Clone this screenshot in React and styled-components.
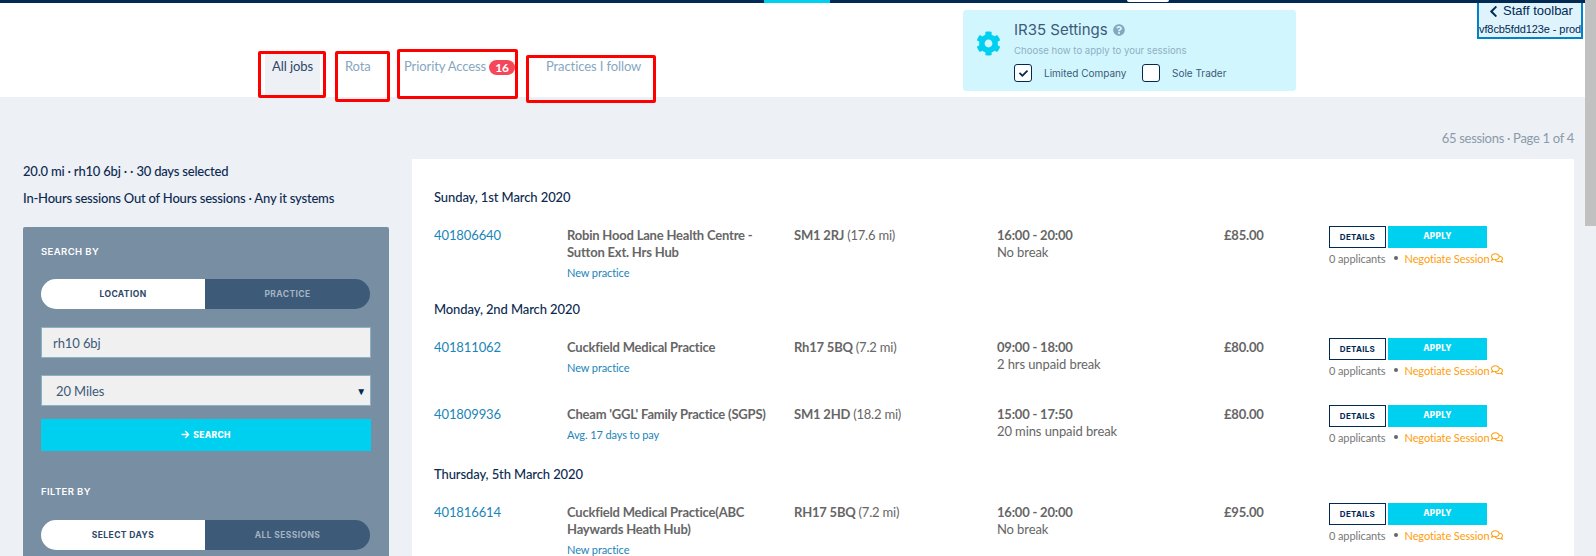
import React from "react";
import styled, { createGlobalStyle } from "styled-components";
import {
  FaChevronLeft,
  FaCog,
  FaQuestionCircle,
  FaCheck,
  FaArrowRight,
  FaRegComments,
} from "react-icons/fa";

const GlobalStyle = createGlobalStyle`
  html, body {
    margin: 0;
    height: 556px;
    overflow: hidden;
    background: #edf0f5;
  }
  * {
    box-sizing: border-box;
  }
`;

const HEADING_FONT = `"Inter", "Open Sans", sans-serif`;
const BODY_FONT = `"Lato", "Liberation Sans", sans-serif`;

const Page = styled.div`
  display: flex;
  height: 556px;
  overflow: hidden;
  font-family: ${BODY_FONT};
`;

const Main = styled.div`
  flex: 1;
  min-width: 0;
`;

// Browser scrollbar on the right edge
const ScrollTrack = styled.div`
  width: 11px;
  background: #edf0f5;
`;

const ScrollThumb = styled.div`
  height: 226px;
  background: #c1c1c1;
`;

const TopBar = styled.div`
  height: 3px;
  background: #002a54;
  display: flex;
`;

const ActiveNavMark = styled.div`
  width: 66px;
  margin-left: 764px;
  background: #00d0f0;
`;

const UserMark = styled.div`
  width: 42px;
  height: 2px;
  margin-left: 297px;
  background: #fff;
  border-radius: 0 0 3px 3px;
`;

const Header = styled.header`
  position: relative;
  display: flex;
  height: 94px;
  padding-left: 258px;
  background: #fff;
`;

const TabRow = styled.nav`
  display: flex;
  align-items: flex-start;
  width: 398px;
  padding-top: 46px;
`;

// Red annotation box around each tab, it hangs over the grey page below
const Tab = styled.a`
  flex: none;
  position: relative;
  z-index: 2;
  display: flex;
  align-items: flex-start;
  width: ${(p) => p.$width}px;
  height: ${(p) => p.$height}px;
  margin-top: ${(p) => p.$top}px;
  margin-left: ${(p) => p.$left}px;
  padding-top: ${(p) => p.$textTop}px;
  padding-left: ${(p) => p.$textLeft}px;
  border: 3px solid #ff0000;
  border-radius: 2px;
  font-size: 13px;
  line-height: 16px;
  letter-spacing: -0.1px;
  white-space: nowrap;
  color: #86a8bf;
`;

const ActiveTabFill = styled.span`
  flex: none;
  width: 55px;
  height: calc(100% + 4px);
  margin-top: -4px;
  padding-top: 4px;
  text-align: center;
  background: #edf0f5;
  color: #2d4767;
`;

const Badge = styled.span`
  height: 15px;
  margin-left: 3px;
  margin-top: 2px;
  padding: 0 6px;
  border-radius: 8px;
  background: #f6475a;
  color: #fff;
  font-size: 12px;
  font-weight: 700;
  line-height: 16px;
`;

const SettingsCard = styled.section`
  display: flex;
  align-items: flex-start;
  width: 333px;
  height: 81px;
  margin-top: 7px;
  margin-left: 307px;
  padding: 0 0 0 13px;
  border-radius: 3px;
  background: #d2f6fe;
`;

const GearIcon = styled(FaCog)`
  flex: none;
  width: 25px;
  height: 25px;
  margin-top: 21px;
  color: #00d0f0;
`;

const SettingsBody = styled.div`
  margin-left: 13px;
  padding-top: 11px;
`;

const SettingsTitle = styled.h3`
  display: flex;
  align-items: center;
  gap: 5px;
  margin: 0;
  font-family: ${HEADING_FONT};
  font-size: 15px;
  font-weight: 400;
  line-height: 18px;
  color: #3d5a78;
`;

const HelpIcon = styled(FaQuestionCircle)`
  width: 12px;
  height: 12px;
  color: #86a8bf;
`;

const SettingsHint = styled.p`
  margin: 5px 0 0;
  font-family: ${HEADING_FONT};
  font-size: 9.6px;
  line-height: 14px;
  color: #8fb0c2;
`;

const CheckRow = styled.div`
  display: flex;
  align-items: center;
  margin-top: 6px;
`;

const CheckBox = styled.span`
  flex: none;
  display: flex;
  align-items: center;
  justify-content: center;
  width: 18px;
  height: 18px;
  border: 1.5px solid #002a54;
  border-radius: 3px;
  background: #fff;
  color: #002a54;
  font-size: 9px;
`;

const CheckLabel = styled.span`
  width: ${(p) => p.$width}px;
  margin-left: 12px;
  font-family: ${HEADING_FONT};
  font-size: 10px;
  color: #3d5a78;
`;

const StaffToolbar = styled.aside`
  position: absolute;
  top: 0;
  right: 2px;
  z-index: 3;
  width: 106px;
  height: 36px;
  border: 2px solid #0082ca;
  border-top: 0;
  background: #dff3fd;
  color: #002a54;
  font-family: "Liberation Sans", sans-serif;
  text-align: center;
  white-space: nowrap;
`;

const ToolbarTitle = styled.div`
  display: flex;
  align-items: center;
  justify-content: center;
  gap: 3px;
  font-size: 13px;
  line-height: 16px;
`;

const ToolbarVersion = styled.div`
  margin-top: 2px;
  font-size: 11px;
  line-height: 16px;
  letter-spacing: -0.1px;
`;

const Content = styled.div`
  display: grid;
  grid-template-columns: 366px 1fr;
  column-gap: 23px;
  padding: 0 11px 0 23px;
`;

const LeftColumn = styled.div`
  padding-top: 61px;
`;

const Summary = styled.p`
  margin: 0;
  font-size: 13px;
  font-weight: 500;
  line-height: 27px;
  letter-spacing: -0.2px;
  white-space: nowrap;
  color: #0c2a50;
`;

const SearchPanel = styled.div`
  height: 400px;
  margin-top: 15px;
  padding: 0 18px;
  border-radius: 2px;
  background: #778ea3;
`;

const PanelLabel = styled.h4`
  margin: 0;
  padding-top: ${(p) => p.$top}px;
  font-family: ${HEADING_FONT};
  font-size: 9.5px;
  font-weight: 600;
  line-height: 14px;
  letter-spacing: 0.4px;
  color: #fff;
`;

const Toggle = styled.div`
  display: grid;
  grid-template-columns: 164px 165px;
  height: 30px;
  margin-top: ${(p) => p.$top}px;
`;

const ToggleOption = styled.button`
  border: 0;
  padding: 0 0 1px;
  border-radius: ${(p) => (p.$active ? "15px 0 0 15px" : "0 15px 15px 0")};
  background: ${(p) => (p.$active ? "#fff" : "#3d5a78")};
  color: ${(p) => (p.$active ? "#2d4767" : "#a3b3c3")};
  font-family: ${HEADING_FONT};
  font-size: 8.5px;
  font-weight: 700;
  letter-spacing: 0.4px;
`;

const Field = styled.div`
  display: flex;
  align-items: center;
  justify-content: space-between;
  height: 31px;
  margin-top: ${(p) => p.$top}px;
  padding: 0 4px 0 ${(p) => p.$indent}px;
  border: 1px solid #8ab3c6;
  background: #f0f0f0;
  font-size: 13px;
  letter-spacing: -0.1px;
  color: #3d5a78;
`;

const SelectArrow = styled.span`
  font-size: 10px;
  color: #002a54;
`;

const SearchButton = styled.button`
  display: flex;
  align-items: center;
  justify-content: center;
  gap: 3px;
  width: 100%;
  height: 32px;
  margin-top: 13px;
  padding-bottom: 2px;
  border: 0;
  background: #00d0f0;
  color: #fff;
  font-family: ${HEADING_FONT};
  font-size: 8.5px;
  font-weight: 800;
  letter-spacing: 0.3px;
`;

const RightColumn = styled.div`
  min-width: 0;
`;

const SessionCount = styled.div`
  height: 62px;
  padding-top: 32px;
  text-align: right;
  font-size: 13px;
  line-height: 18px;
  letter-spacing: -0.3px;
  color: #8b9aaa;
`;

const SessionList = styled.div`
  height: 400px;
  padding: 29px 0 0 22px;
  background: #fff;
`;

const DateHeading = styled.h3`
  margin: 0 0 21px;
  font-size: 13px;
  font-weight: 500;
  line-height: 18px;
  letter-spacing: -0.1px;
  color: #0c2a50;
`;

const SessionRow = styled.div`
  display: grid;
  grid-template-columns: 133px 227px 203px 227px 105px 1fr;
  min-height: 59px;
  padding-bottom: 19px;
  font-size: 13px;
  line-height: 17px;
  letter-spacing: -0.1px;
  color: #666;

  & + & {
    margin-top: 8px;
  }
`;

const SessionId = styled.a`
  color: #1a85b8;
`;

const StrongText = styled.div`
  font-weight: 700;
  letter-spacing: -0.2px;
  color: #666;
`;

const PracticeName = styled(StrongText)`
  width: 210px;
`;

const PracticeNote = styled.a`
  display: block;
  margin-top: 3px;
  font-size: 11px;
  color: #1a85b8;
`;

const Distance = styled.span`
  font-weight: 400;
`;

const ActionColumn = styled.div`
  margin-top: -1px;
`;

const ButtonRow = styled.div`
  display: flex;
  gap: 2px;
`;

const DetailsButton = styled.button`
  width: 57px;
  height: 22px;
  padding: 0;
  border: 1px solid #002a54;
  background: #fff;
  color: #002a54;
  font-family: ${HEADING_FONT};
  font-size: 8px;
  font-weight: 700;
  letter-spacing: 0.3px;
`;

const ApplyButton = styled.button`
  width: 99px;
  height: 22px;
  padding: 0 0 2px;
  border: 0;
  background: #00d0f0;
  color: #fff;
  font-family: ${HEADING_FONT};
  font-size: 8.3px;
  font-weight: 800;
  letter-spacing: 0.3px;
`;

const ActionMeta = styled.div`
  display: flex;
  align-items: center;
  height: 18px;
  margin-top: 1px;
  font-size: 11px;
  white-space: nowrap;
  color: #777;
`;

const MetaDot = styled.span`
  width: 4px;
  height: 4px;
  margin: 0 7px 0 8px;
  border-radius: 50%;
  background: #666;
`;

const NegotiateLink = styled.a`
  display: flex;
  align-items: center;
  gap: 2px;
  color: #ff9d0a;
`;

const groups = [
  {
    date: "Sunday, 1st March 2020",
    sessions: [
      {
        id: "401806640",
        name: "Robin Hood Lane Health Centre - Sutton Ext. Hrs Hub",
        note: "New practice",
        postcode: "SM1 2RJ",
        distance: "(17.6 mi)",
        time: "16:00 - 20:00",
        breakText: "No break",
        price: "£85.00",
      },
    ],
  },
  {
    date: "Monday, 2nd March 2020",
    sessions: [
      {
        id: "401811062",
        name: "Cuckfield Medical Practice",
        note: "New practice",
        postcode: "Rh17 5BQ",
        distance: "(7.2 mi)",
        time: "09:00 - 18:00",
        breakText: "2 hrs unpaid break",
        price: "£80.00",
      },
      {
        id: "401809936",
        name: "Cheam 'GGL' Family Practice (SGPS)",
        note: "Avg. 17 days to pay",
        postcode: "SM1 2HD",
        distance: "(18.2 mi)",
        time: "15:00 - 17:50",
        breakText: "20 mins unpaid break",
        price: "£80.00",
      },
    ],
  },
  {
    date: "Thursday, 5th March 2020",
    sessions: [
      {
        id: "401816614",
        name: "Cuckfield Medical Practice(ABC Haywards Heath Hub)",
        note: "New practice",
        postcode: "RH17 5BQ",
        distance: "(7.2 mi)",
        time: "16:00 - 20:00",
        breakText: "No break",
        price: "£95.00",
      },
    ],
  },
];

function Session({ session }) {
  return (
    <SessionRow>
      <SessionId>{session.id}</SessionId>
      <div>
        <PracticeName>{session.name}</PracticeName>
        <PracticeNote>{session.note}</PracticeNote>
      </div>
      <div>
        <StrongText>
          {session.postcode} <Distance>{session.distance}</Distance>
        </StrongText>
      </div>
      <div>
        <StrongText>{session.time}</StrongText>
        <div>{session.breakText}</div>
      </div>
      <StrongText>{session.price}</StrongText>
      <ActionColumn>
        <ButtonRow>
          <DetailsButton>DETAILS</DetailsButton>
          <ApplyButton>APPLY</ApplyButton>
        </ButtonRow>
        <ActionMeta>
          0 applicants
          <MetaDot />
          <NegotiateLink>
            Negotiate Session <FaRegComments size={12} />
          </NegotiateLink>
        </ActionMeta>
      </ActionColumn>
    </SessionRow>
  );
}

export default function App() {
  return (
    <>
      <GlobalStyle />
      <Page>
        <Main>
          <TopBar>
            <ActiveNavMark />
            <UserMark />
          </TopBar>
          <Header>
            <TabRow>
              <Tab $width={68} $height={47} $top={2} $left={0} $textTop={4} $textLeft={4}>
                <ActiveTabFill>All jobs</ActiveTabFill>
              </Tab>
              <Tab $width={55} $height={51} $top={2} $left={9} $textTop={4} $textLeft={7}>
                Rota
              </Tab>
              <Tab $width={121} $height={50} $top={0} $left={7} $textTop={6} $textLeft={4}>
                Priority Access
                <Badge>16</Badge>
              </Tab>
              <Tab $width={130} $height={48} $top={6} $left={8} $textTop={0} $textLeft={17}>
                Practices I follow
              </Tab>
            </TabRow>
            <SettingsCard>
              <GearIcon />
              <SettingsBody>
                <SettingsTitle>
                  IR35 Settings <HelpIcon />
                </SettingsTitle>
                <SettingsHint>Choose how to apply to your sessions</SettingsHint>
                <CheckRow>
                  <CheckBox>
                    <FaCheck />
                  </CheckBox>
                  <CheckLabel $width={98}>Limited Company</CheckLabel>
                  <CheckBox />
                  <CheckLabel $width={60}>Sole Trader</CheckLabel>
                </CheckRow>
              </SettingsBody>
            </SettingsCard>
            <StaffToolbar>
              <ToolbarTitle>
                <FaChevronLeft size={13} /> Staff toolbar
              </ToolbarTitle>
              <ToolbarVersion>vf8cb5fdd123e - prod</ToolbarVersion>
            </StaffToolbar>
          </Header>
          <Content>
            <LeftColumn>
              <Summary>20.0 mi · rh10 6bj · · 30 days selected</Summary>
              <Summary>In-Hours sessions Out of Hours sessions · Any it systems</Summary>
              <SearchPanel>
                <PanelLabel $top={18}>SEARCH BY</PanelLabel>
                <Toggle $top={20}>
                  <ToggleOption $active>LOCATION</ToggleOption>
                  <ToggleOption>PRACTICE</ToggleOption>
                </Toggle>
                <Field $top={18} $indent={11}>
                  rh10 6bj
                </Field>
                <Field $top={17} $indent={14}>
                  20 Miles
                  <SelectArrow>▼</SelectArrow>
                </Field>
                <SearchButton>
                  <FaArrowRight size={9} /> SEARCH
                </SearchButton>
                <PanelLabel $top={34}>FILTER BY</PanelLabel>
                <Toggle $top={21}>
                  <ToggleOption $active>SELECT DAYS</ToggleOption>
                  <ToggleOption>ALL SESSIONS</ToggleOption>
                </Toggle>
              </SearchPanel>
            </LeftColumn>
            <RightColumn>
              <SessionCount>65 sessions · Page 1 of 4</SessionCount>
              <SessionList>
                {groups.map((group) => (
                  <div key={group.date}>
                    <DateHeading>{group.date}</DateHeading>
                    {group.sessions.map((session) => (
                      <Session key={session.id} session={session} />
                    ))}
                  </div>
                ))}
              </SessionList>
            </RightColumn>
          </Content>
        </Main>
        <ScrollTrack>
          <ScrollThumb />
        </ScrollTrack>
      </Page>
    </>
  );
}
